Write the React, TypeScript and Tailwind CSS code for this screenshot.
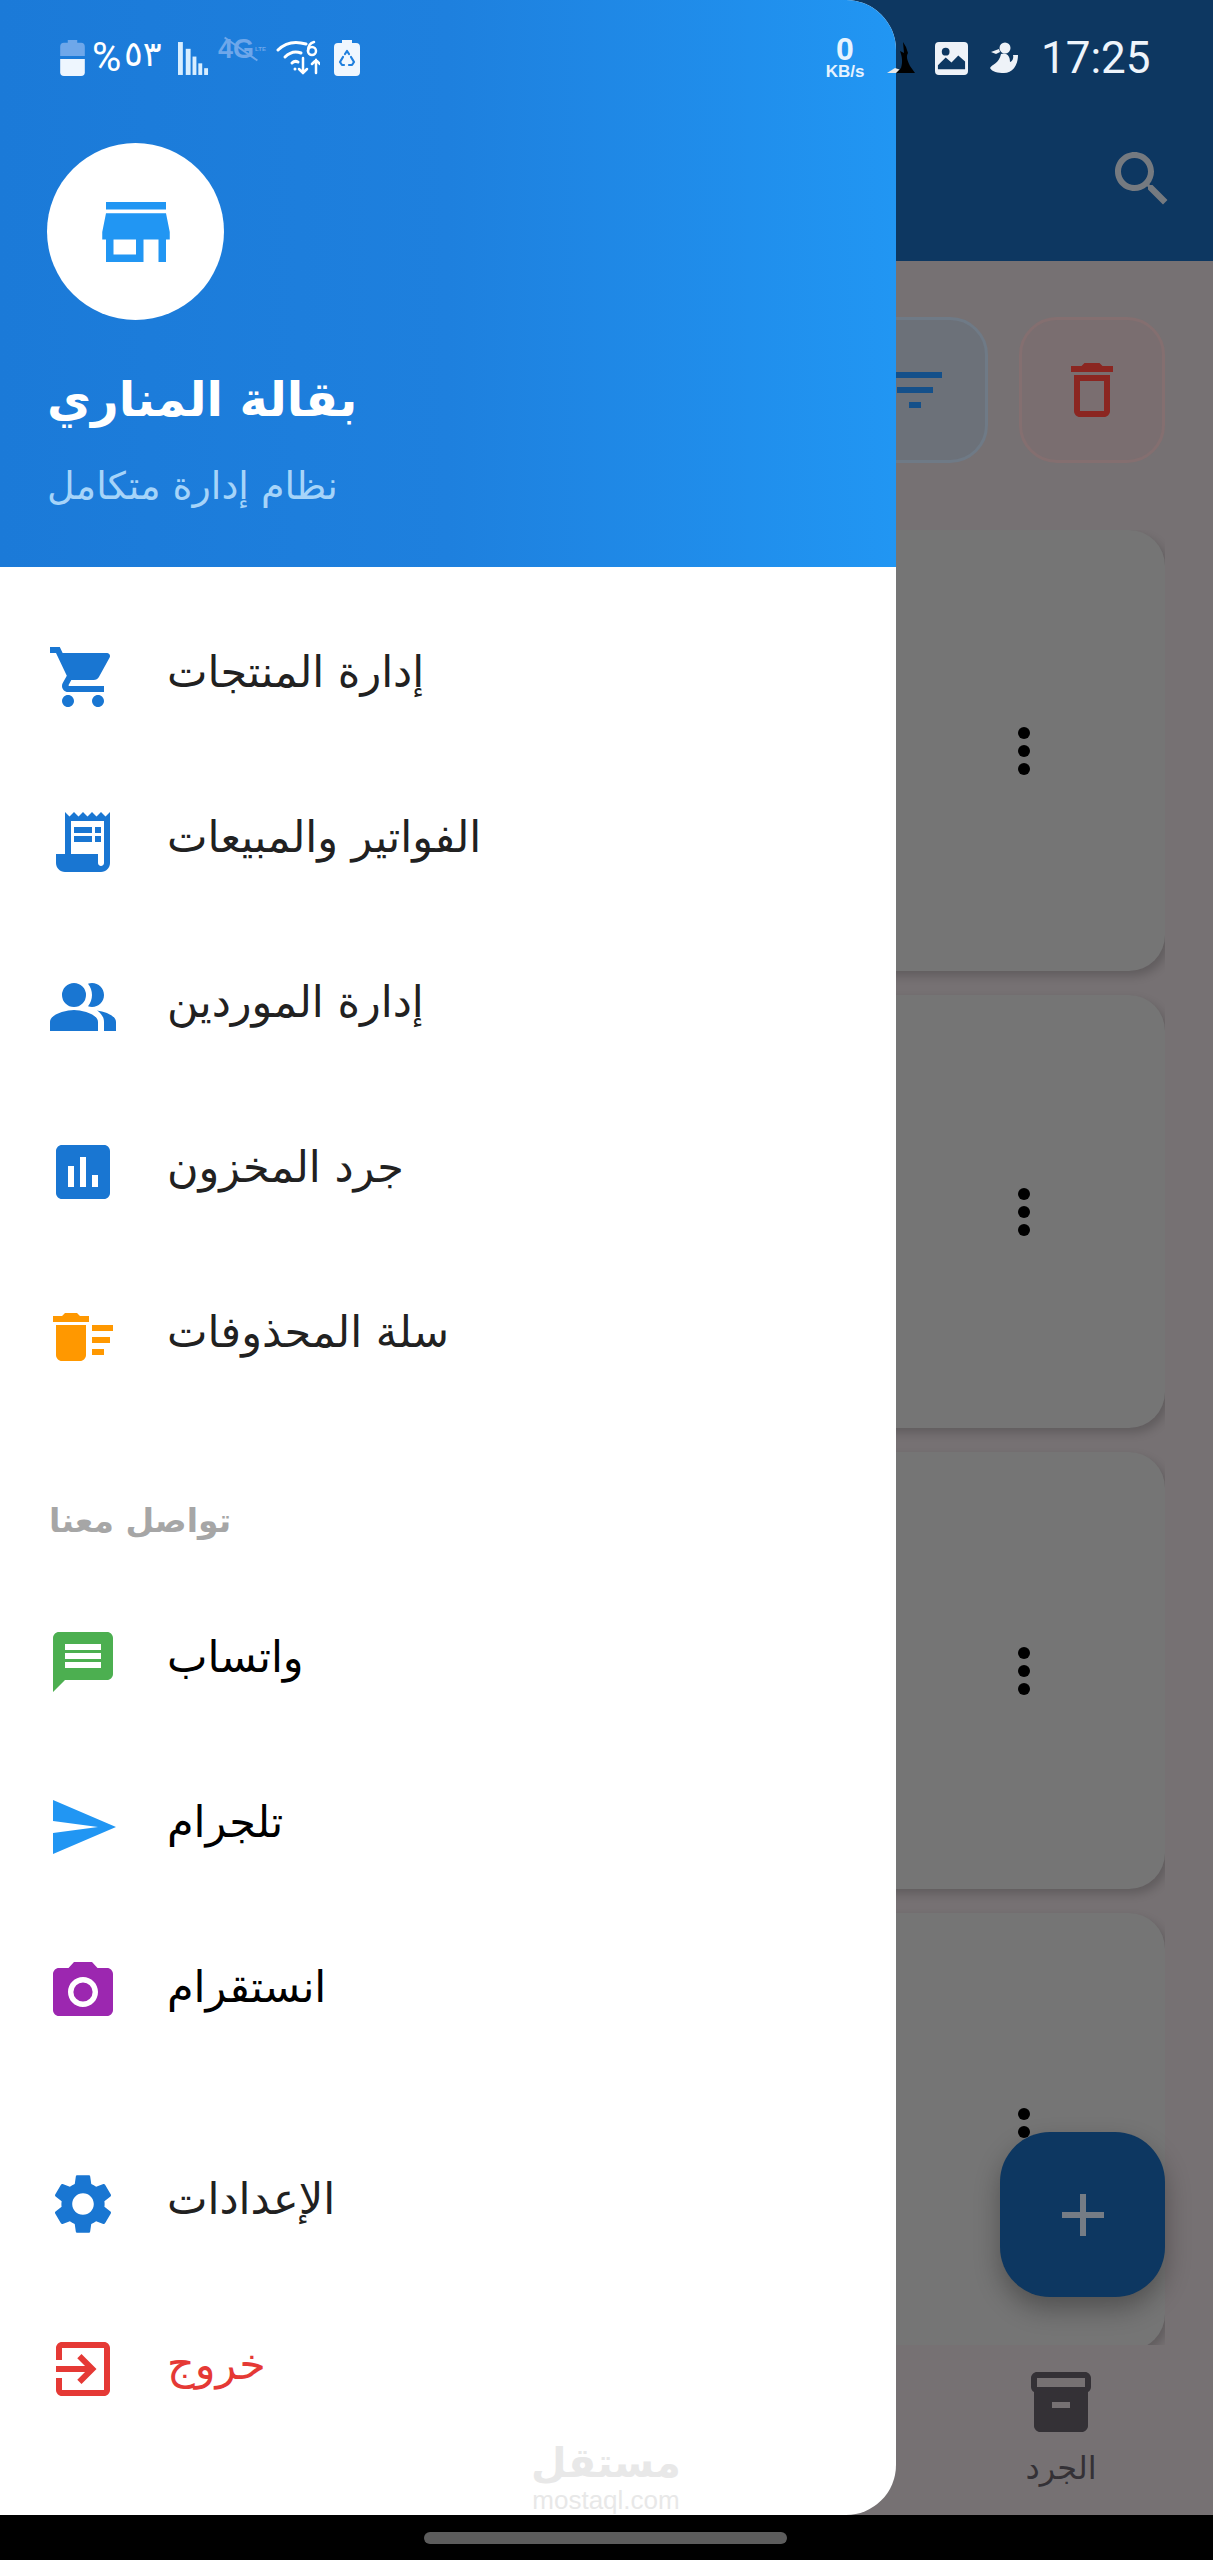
import React from "react";

const ICONS: Record<string, string> = {
  cart: "M7 18c-1.1 0-1.99.9-1.99 2S5.9 22 7 22s2-.9 2-2-.9-2-2-2zM1 2v2h2l3.6 7.59-1.35 2.45c-.16.28-.25.61-.25.96 0 1.1.9 2 2 2h12v-2H7.42c-.14 0-.25-.11-.25-.25l.03-.12.9-1.63h7.45c.75 0 1.41-.41 1.75-1.03l3.58-6.49c.08-.14.12-.31.12-.48 0-.55-.45-1-1-1H5.21l-.94-2H1zm16 16c-1.1 0-1.99.9-1.99 2s.89 2 1.99 2 2-.9 2-2-.9-2-2-2z",
  receipt: "M19.5 3.5L18 2l-1.5 1.5L15 2l-1.5 1.5L12 2l-1.5 1.5L9 2 7.5 3.5 6 2v14H3v3c0 1.66 1.34 3 3 3h12c1.66 0 3-1.34 3-3V2l-1.5 1.5zM19 19c0 .55-.45 1-1 1s-1-.45-1-1v-3H8V5h11v14zM9 7h6v2H9zM16 7h2v2h-2zM9 10h6v2H9zM16 10h2v2h-2z",
  people: "M16.67 13.13C18.04 14.06 19 15.32 19 17v3h4v-3c0-2.18-3.57-3.47-6.33-3.87zM9 12a4 4 0 1 0 0-8 4 4 0 0 0 0 8zM15 12c2.21 0 4-1.79 4-4s-1.79-4-4-4c-.47 0-.91.1-1.33.24C14.5 5.27 15 6.58 15 8s-.5 2.73-1.33 3.76c.42.14.86.24 1.33.24zM9 13c-2.67 0-8 1.34-8 4v3h16v-3c0-2.66-5.33-4-8-4z",
  chart: "M19 3H5c-1.1 0-2 .9-2 2v14c0 1.1.9 2 2 2h14c1.1 0 2-.9 2-2V5c0-1.1-.9-2-2-2zM9 17H7v-7h2v7zm4 0h-2V7h2v10zm4 0h-2v-4h2v4z",
  sweep: "M15 16h4v2h-4zm0-8h7v2h-7zm0 4h6v2h-6zM3 18c0 1.1.9 2 2 2h6c1.1 0 2-.9 2-2V8H3v10zM14 5h-3l-1-1H6L5 5H2v2h12z",
  message: "M20 2H4c-1.1 0-1.99.9-1.99 2L2 22l4-4h14c1.1 0 2-.9 2-2V4c0-1.1-.9-2-2-2zm-2 12H6v-2h12v2zm0-3H6V9h12v2zm0-3H6V6h12v2z",
  send: "M2.01 21L23 12 2.01 3 2 10l15 2-15 2z",
  camera: "M9 2L7.17 4H4c-1.1 0-2 .9-2 2v12c0 1.1.9 2 2 2h16c1.1 0 2-.9 2-2V6c0-1.1-.9-2-2-2h-3.17L15 2H9zm3 15c-2.76 0-5-2.24-5-5s2.24-5 5-5 5 2.24 5 5-2.24 5-5 5zM12 15.2a3.2 3.2 0 1 0 0-6.4 3.2 3.2 0 0 0 0 6.4z",
  settings: "M19.14 12.94c.04-.3.06-.61.06-.94 0-.32-.02-.64-.07-.94l2.03-1.58c.18-.14.23-.41.12-.61l-1.92-3.32c-.12-.22-.37-.29-.59-.22l-2.39.96c-.5-.38-1.03-.7-1.62-.94l-.36-2.54c-.04-.24-.24-.41-.48-.41h-3.84c-.24 0-.43.17-.47.41l-.36 2.54c-.59.24-1.13.57-1.62.94l-2.39-.96c-.22-.08-.47 0-.59.22L2.74 8.87c-.12.21-.08.47.12.61l2.03 1.58c-.05.3-.09.63-.09.94s.02.64.07.94l-2.03 1.58c-.18.14-.23.41-.12.61l1.92 3.32c.12.22.37.29.59.22l2.39-.96c.5.38 1.03.7 1.62.94l.36 2.54c.05.24.24.41.48.41h3.84c.24 0 .44-.17.47-.41l.36-2.54c.59-.24 1.13-.56 1.62-.94l2.39.96c.22.08.47 0 .59-.22l1.92-3.32c.12-.22.07-.47-.12-.61l-2.01-1.58zM12 15.6c-1.98 0-3.6-1.62-3.6-3.6s1.62-3.6 3.6-3.6 3.6 1.62 3.6 3.6-1.62 3.6-3.6 3.6z",
  logout: "M10.09 15.59L11.5 17l5-5-5-5-1.41 1.41L12.67 11H3v2h9.67l-2.58 2.59zM19 3H5c-1.11 0-2 .9-2 2v4h2V5h14v14H5v-4H3v4c0 1.1.89 2 2 2h14c1.1 0 2-.9 2-2V5c0-1.1-.9-2-2-2z",
  store: "M20 4H4v2h16V4zm1 10v-2l-1-5H4l-1 5v2h1v6h10v-6h4v6h2v-6h1zm-9 4H6v-4h6v4z",
  search: "M15.5 14h-.79l-.28-.27C15.41 12.59 16 11.11 16 9.5 16 5.91 13.09 3 9.5 3S3 5.91 3 9.5 5.91 16 9.5 16c1.61 0 3.09-.59 4.23-1.57l.27.28v.79l5 4.99L20.49 19l-4.99-5zm-6 0C7.01 14 5 11.99 5 9.5S7.01 5 9.5 5 14 7.01 14 9.5 11.99 14 9.5 14z",
  filter: "M10 18h4v-2h-4v2zM3 6v2h18V6H3zm3 7h12v-2H6v2z",
  trash: "M6 19c0 1.1.9 2 2 2h8c1.1 0 2-.9 2-2V7H6v12zM8 9h8v10H8V9zm7.5-5l-1-1h-5l-1 1H5v2h14V4z",
  box: "M20 2H4c-1 0-2 .9-2 2v3.01c0 .72.43 1.34 1 1.69V20c0 1.1 1.1 2 2 2h14c.9 0 2-.9 2-2V8.7c.57-.35 1-.97 1-1.69V4c0-1.1-1-2-2-2zm-5 12H9v-2h6v2zm5-7H4V4h16v3z",
  plus: "M19 13h-6v6h-2v-6H5v-2h6V5h2v6h6v2z",
};

function Icon({ name, className }: { name: string; className: string }) {
  return (
    <svg viewBox="0 0 24 24" fill="currentColor" fillRule="evenodd" className={className}>
      <path d={ICONS[name]} />
    </svg>
  );
}

function MenuRow({ icon, label, iconColor, textColor }: { icon: string; label: string; iconColor: string; textColor: string }) {
  return (
    <div className="flex h-[165px] items-center gap-[48px] pl-[47px]">
      <Icon name={icon} className={`h-[72px] w-[72px] shrink-0 ${iconColor}`} />
      <span dir="rtl" className={`-mt-[8px] text-[43px] leading-none ${textColor}`}>
        {label}
      </span>
    </div>
  );
}

function Card({ height, children }: { height: string; children?: React.ReactNode }) {
  return (
    <div className={`relative ${height} w-full shrink-0 rounded-[36px] bg-[#757575] shadow-[4px_5px_10px_rgba(0,0,0,0.18)]`}>
      <div className="absolute right-[135px] top-1/2 flex -translate-y-1/2 flex-col gap-[6px]">
        <span className="h-[12px] w-[12px] rounded-full bg-black" />
        <span className="h-[12px] w-[12px] rounded-full bg-black" />
        <span className="h-[12px] w-[12px] rounded-full bg-black" />
      </div>
      {children}
    </div>
  );
}

function BackgroundApp() {
  return (
    <div className="flex h-[2515px] w-full flex-col bg-[#767173]">
      <div className="flex h-[261px] shrink-0 items-end justify-end bg-[#0d3761] pb-[46px] pr-[35px]">
        <Icon name="search" className="h-[72px] w-[72px] text-[#757a80]" />
      </div>
      <div className="flex flex-1 flex-col overflow-hidden px-[48px] pt-[56px]">
        <div className="flex shrink-0 justify-end gap-[31px]">
          <div className="flex h-[146px] w-[146px] items-center justify-center rounded-[38px] border-[3px] border-[#6f7a86] bg-[#6c7179]">
            <Icon name="filter" className="h-[72px] w-[72px] text-[#14508a]" />
          </div>
          <div className="flex h-[146px] w-[146px] items-center justify-center rounded-[38px] border-[3px] border-[#846f70] bg-[#7a6e70]">
            <Icon name="trash" className="h-[72px] w-[72px] text-[#8b2621]" />
          </div>
        </div>
        <div className="mt-[67px] flex flex-1 flex-col gap-[24px] overflow-hidden">
          <Card height="h-[441px]" />
          <Card height="h-[433px]" />
          <Card height="h-[437px]" />
          <Card height="h-[437px]" />
        </div>
      </div>
      <div className="flex h-[170px] shrink-0 justify-end bg-[#767173] pr-[116px]">
        <div className="flex w-[72px] flex-col items-center pt-[21px]">
          <Icon name="box" className="h-[72px] w-[72px] shrink-0 text-[#343136]" />
          <span dir="rtl" className="mt-[14px] whitespace-nowrap text-[32px] leading-none text-[#343136]">
            الجرد
          </span>
        </div>
      </div>
    </div>
  );
}

function StatusLeft() {
  return (
    <div className="flex h-[36px] items-center text-white">
      <svg viewBox="0 0 26 38" className="ml-[60px] h-[36px] w-[25px] shrink-0">
        <path d="M8 0h10v3h4a4 4 0 0 1 4 4v10H0V7a4 4 0 0 1 4-4h4z" fill="#6ea7ea" />
        <path d="M0 20h26v14a4 4 0 0 1-4 4H4a4 4 0 0 1-4-4z" fill="#eef6fe" />
      </svg>
      <span className="ml-[7px] w-[29px] text-[40px] leading-none [font-family:Roboto]">%</span>
      <span className="ml-[3px] -mt-[8px] w-[36px] whitespace-nowrap text-[35px] leading-none">٥٣</span>
      <svg viewBox="0 0 32 34" className="ml-[18px] h-[33px] w-[31px] shrink-0" fill="#d8eeff">
        <rect x="0" y="0" width="5" height="34" />
        <rect x="8" y="7" width="5" height="27" />
        <rect x="15" y="15" width="4" height="19" />
        <rect x="21" y="22" width="4" height="12" />
        <rect x="27" y="27" width="4" height="7" />
      </svg>
      <div className="relative ml-[9px] -mt-[18px] flex h-[22px] w-[44px] shrink-0 items-center text-[#6ea7ea]">
        <span className="text-[27px] font-bold leading-none [font-family:'Liberation_Sans']">4G</span>
        <span className="ml-[1px] text-[6px] font-bold leading-[6px] [font-family:'Liberation_Sans']">LTE</span>
        <span className="absolute left-[3px] top-[10px] h-[2px] w-[40px] rotate-[35deg] bg-[#6ea7ea]" />
      </div>
      <svg viewBox="0 0 44 36" className="ml-[14px] h-[36px] w-[44px] shrink-0" fill="none" stroke="white" strokeWidth="3" strokeLinecap="round">
        <path d="M2 10 C10 2 20 1 30 4" />
        <path d="M9 17 C14 12 20 11 25 13" />
        <path d="M16 23 C18 21 20 21 22 22" />
        <path d="M27 18 V33 M23 29 L27 33 L31 29" strokeWidth="2.5" />
        <path d="M40 33 V20 M36 24 L40 20 L44 24" strokeWidth="2.5" />
        <circle cx="19" cy="29" r="1.5" fill="white" stroke="none" />
        <circle cx="36" cy="11" r="4" strokeWidth="2.5" />
        <path d="M32 11 C32 6 34 3 38 2" strokeWidth="2.5" />
      </svg>
      <svg viewBox="0 0 26 36" className="ml-[14px] h-[36px] w-[26px] shrink-0">
        <path d="M8 0h10v3h4a4 4 0 0 1 4 4v25a4 4 0 0 1-4 4H4a4 4 0 0 1-4-4V7a4 4 0 0 1 4-4h4z" fill="#f0f7fe" />
        <path d="M11 14 L13 11 L15 14 M17 17 L20 22 L18 25 H15 M10 25 H8 L6 22 L9 17" fill="none" stroke="#1f7fdd" strokeWidth="2.2" strokeLinecap="round" strokeLinejoin="round" />
      </svg>
    </div>
  );
}

export default function App() {
  return (
    <div className="relative h-[2560px] w-[1213px] overflow-hidden bg-black [font-family:'DejaVu_Sans',sans-serif]">
      <BackgroundApp />

      {/* FAB */}
      <div className="absolute left-[1000px] top-[2132px] flex h-[165px] w-[165px] items-center justify-center rounded-[50px] bg-[#0d3761] shadow-[0_12px_26px_rgba(0,0,0,0.3)]">
        <Icon name="plus" className="h-[72px] w-[72px] text-[#757c85]" />
      </div>

      {/* drawer */}
      <div className="absolute left-0 top-0 flex h-[2515px] w-[896px] flex-col overflow-hidden rounded-r-[50px] bg-white">
        <div className="h-[567px] shrink-0 bg-gradient-to-r from-[#1b7ad8] via-[#1e80de] to-[#2196f3] pt-[40px]">
          <StatusLeft />
          <div className="ml-[47px] mt-[67px] flex h-[177px] w-[177px] items-center justify-center rounded-full bg-white">
            <Icon name="store" className="h-[90px] w-[90px] text-[#2196f3]" />
          </div>
          <div dir="rtl" className="ml-[47px] mt-[44px] w-fit text-[48px] font-bold leading-[70px] text-white">
            بقالة المناري
          </div>
          <div dir="rtl" className="ml-[47px] mt-[27px] w-fit text-[38px] leading-[50px] text-[#a6d4f9]">
            نظام إدارة متكامل
          </div>
        </div>

        <div className="pt-[27px]">
          <MenuRow icon="cart" label="إدارة المنتجات" iconColor="text-[#1976d2]" textColor="text-[#212121]" />
          <MenuRow icon="receipt" label="الفواتير والمبيعات" iconColor="text-[#1976d2]" textColor="text-[#212121]" />
          <MenuRow icon="people" label="إدارة الموردين" iconColor="text-[#1976d2]" textColor="text-[#212121]" />
          <MenuRow icon="chart" label="جرد المخزون" iconColor="text-[#1976d2]" textColor="text-[#212121]" />
          <MenuRow icon="sweep" label="سلة المحذوفات" iconColor="text-[#ff9800]" textColor="text-[#212121]" />
        </div>

        <div className="flex h-[160px] items-center pl-[49px] pt-[42px]">
          <span dir="rtl" className="text-[33px] font-bold leading-none text-[#a6a6a6]">
            تواصل معنا
          </span>
        </div>

        <MenuRow icon="message" label="واتساب" iconColor="text-[#4caf50]" textColor="text-black" />
        <MenuRow icon="send" label="تلجرام" iconColor="text-[#2196f3]" textColor="text-black" />
        <MenuRow icon="camera" label="انستقرام" iconColor="text-[#9c27b0]" textColor="text-black" />

        <div className="mt-[47px]">
          <MenuRow icon="settings" label="الإعدادات" iconColor="text-[#1976d2]" textColor="text-[#212121]" />
          <MenuRow icon="logout" label="خروج" iconColor="text-[#e53935]" textColor="text-[#e53935]" />
        </div>

        {/* watermark */}
        <div className="absolute left-[533px] top-[2438px] flex w-[146px] flex-col items-center text-[#e8e8e8]">
          <span dir="rtl" className="whitespace-nowrap text-[41px] font-bold leading-[50px]">مستقل</span>
          <span className="whitespace-nowrap text-[26px] leading-[24px] [font-family:'Liberation_Sans']">mostaql.com</span>
        </div>
      </div>

      {/* status bar bits that stay on top of the drawer */}
      <div className="absolute left-[805px] top-[36px] flex w-[80px] flex-col items-center gap-[3px] font-bold text-[#e6f3ff] [font-family:'Liberation_Sans']">
        <span className="text-[32px] leading-[26px]">0</span>
        <span className="text-[17px] leading-[14px]">KB/s</span>
      </div>
      <div className="absolute left-[887px] top-[36px] flex h-[44px] items-center">
        <svg viewBox="0 0 28 32" className="h-[32px] w-[28px] shrink-0">
          <path d="M0 31 L8 26 L14 28 L14 31 Z" fill="#e8e8e8" />
          <path d="M16 0 L19 5 L21 11 C19 14 20 18 23 24 L28 31 L9 31 L14 26 C16 20 15 14 13 9 L17 11 Z" fill="#000" />
        </svg>
        <svg viewBox="0 0 34 34" className="ml-[20px] h-[33px] w-[33px] shrink-0">
          <rect width="34" height="34" rx="4" fill="#eef2f8" />
          <circle cx="11" cy="10" r="4" fill="#0d3761" />
          <path d="M3 28 V24 L11 16 L17 21 L24 14 L31 20 V28 Z" fill="#0d3761" />
        </svg>
        <svg viewBox="0 0 28 32" className="ml-[22px] h-[32px] w-[28px] shrink-0" fill="#eef2f8">
          <circle cx="15" cy="6" r="5.5" />
          <path d="M1 10 L9 7 L10 10 L6 12 Z" />
          <path d="M11 12 C17 10 20 14 20 20 C22 20 24 16 23 13 L28 13 C28 24 22 31 14 31 C8 31 2 30 0 26 C2 22 9 22 11 12 Z" />
        </svg>
        <span className="ml-[23px] whitespace-nowrap text-[44px] leading-none text-[#eef4fb] [font-family:Roboto]">17:25</span>
      </div>

      {/* gesture bar */}
      <div className="absolute left-[424px] top-[2532px] h-[12px] w-[363px] rounded-full bg-[#5c5c5c]" />
    </div>
  );
}
